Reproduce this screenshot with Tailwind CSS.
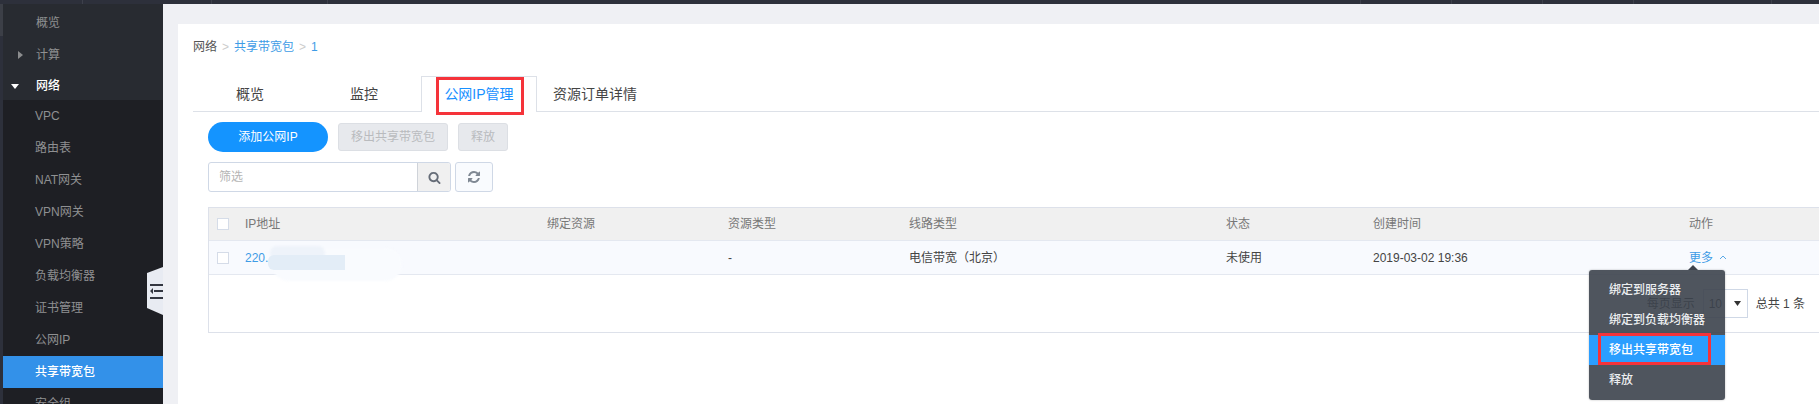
<!DOCTYPE html>
<html lang="en">
<head>
    <meta charset="UTF-8">
    <title>共享带宽包</title>
    <script src="https://cdn.jsdelivr.net/npm/@tailwindcss/browser@4"></script>
</head>
<body class="h-[404px] overflow-hidden bg-[#eff0f4] text-[12px] text-[#444] [font-family:'Liberation_Sans','Noto_Sans_CJK_SC',sans-serif]">
    <div class="relative flex h-[404px] flex-col overflow-hidden">
        <!-- Top bar -->
        <div class="flex h-[4px] shrink-0 bg-[#2d303b]">
            <div class="w-[83px] border-r border-[#3d404b]"></div>
            <div class="w-[129px] border-r border-[#3d404b]"></div>
            <div class="w-[116px] border-r border-[#3d404b]"></div>
            <div class="w-[1033px] border-r border-[#3d404b]"></div>
            <div class="w-[91px] border-r border-[#3d404b]"></div>
            <div class="w-[91px] border-r border-[#3d404b]"></div>
            <div class="w-[91px] border-r border-[#3d404b]"></div>
            <div class="w-[138px] border-r border-[#3d404b]"></div>
        </div>

        <div class="flex min-h-0 flex-1">
            <!-- Sidebar -->
            <div class="flex w-[3px] shrink-0 flex-col bg-[#2d303b]">
                <div class="h-[32px] bg-[#3c3f47]"></div>
            </div>
            <nav class="w-[160px] shrink-0 overflow-hidden bg-[#1e1f24] text-[#8f9092]">
                <div class="bg-[#282b31]">
                    <div class="flex h-[34px] items-center pt-[4px] pl-[33px]">概览</div>
                    <div class="flex h-[32px] items-center pt-[2px]">
                        <span class="w-[33px] pl-[15px]">
                            <svg class="block h-[8px] w-[5px]" viewBox="0 0 5 8"><path d="M0 0l5 4-5 4z" fill="#8b8c8e"/></svg>
                        </span>
                        计算
                    </div>
                    <div class="flex h-[30px] items-center pt-[2px] font-medium text-white">
                        <span class="w-[33px] pl-[8px]">
                            <svg class="block h-[5px] w-[8px]" viewBox="0 0 8 5"><path d="M0 0h8l-4 5z" fill="#fff"/></svg>
                        </span>
                        网络
                    </div>
                </div>
                <ul>
                    <li class="flex h-[32px] items-center pl-[32px]">VPC</li>
                    <li class="flex h-[32px] items-center pl-[32px]">路由表</li>
                    <li class="flex h-[32px] items-center pl-[32px]">NAT网关</li>
                    <li class="flex h-[32px] items-center pl-[32px]">VPN网关</li>
                    <li class="flex h-[32px] items-center pl-[32px]">VPN策略</li>
                    <li class="flex h-[32px] items-center pl-[32px]">负载均衡器</li>
                    <li class="flex h-[32px] items-center pl-[32px]">证书管理</li>
                    <li class="flex h-[32px] items-center pl-[32px]">公网IP</li>
                    <li class="flex h-[32px] items-center bg-[#3391e9] pl-[32px] font-medium text-white">共享带宽包</li>
                    <li class="flex h-[32px] items-center pl-[32px]">安全组</li>
                </ul>
            </nav>

            <!-- Main card -->
            <main class="mt-[20px] ml-[15px] min-w-0 flex-1 bg-white pt-[15px] pl-[15px]">
                <div class="flex h-[16px] items-center text-[#555]">
                    <span>网络</span>
                    <span class="mx-[5px] text-[#ccc]">&gt;</span>
                    <span class="text-[#3e9ce6]">共享带宽包</span>
                    <span class="mx-[5px] text-[#ccc]">&gt;</span>
                    <span class="text-[#3e9ce6]">1</span>
                </div>

                <!-- Tabs -->
                <div class="mt-[21px] flex h-[36px] border-b border-[#dde1e8] text-[14px] text-[#444]">
                    <div class="flex h-[36px] w-[114px] items-center justify-center">概览</div>
                    <div class="flex h-[36px] w-[114px] items-center justify-center">监控</div>
                    <div class="flex h-[36px] w-[116px] items-center justify-center border border-b-0 border-[#dde1e8] bg-white text-[#1890ff]">公网IP管理</div>
                    <div class="flex h-[36px] items-center pl-[16px]">资源订单详情</div>
                </div>

                <div class="pl-[15px]">
                    <!-- Actions -->
                    <div class="mt-[10px] flex h-[30px] items-center">
                        <button class="h-[30px] w-[120px] rounded-[15px] bg-[#1494ff] text-white">添加公网IP</button>
                        <button class="ml-[10px] h-[28px] w-[110px] rounded-[3px] border border-[#dcdfe4] bg-[#e7e9ed] text-[#b9bbbe]">移出共享带宽包</button>
                        <button class="ml-[10px] h-[28px] w-[50px] rounded-[3px] border border-[#dcdfe4] bg-[#e7e9ed] text-[#b9bbbe]">释放</button>
                    </div>

                    <!-- Filter -->
                    <div class="mt-[10px] flex h-[30px]">
                        <div class="flex w-[243px] rounded-[3px] border border-[#cfd8e6]">
                            <div class="flex flex-1 items-center pl-[10px] text-[#b5b5b5]">筛选</div>
                            <div class="flex w-[33px] items-center justify-center rounded-r-[2px] border-l border-[#cfd3d9] bg-[#f0f0f0]">
                                <svg class="h-[13px] w-[13px]" viewBox="0 0 1792 1792"><path fill="#666d78" d="M1216 832q0-185-131.5-316.5t-316.5-131.5-316.5 131.5-131.5 316.5 131.5 316.5 316.5 131.5 316.5-131.5 131.5-316.5zm512 832q0 52-38 90t-90 38q-54 0-90-38l-343-342q-179 124-399 124-143 0-273.5-55.5t-225-150-150-225-55.5-273.5 55.5-273.5 150-225 225-150 273.5-55.5 273.5 55.5 225 150 150 225 55.5 273.5q0 220-124 399l343 343q37 37 37 90z"/></svg>
                            </div>
                        </div>
                        <div class="ml-[4px] flex w-[38px] items-center justify-center rounded-[3px] border border-[#cfd8e6] bg-[#f9fbfe]">
                            <svg class="h-[14px] w-[14px]" viewBox="0 0 1792 1792"><path fill="#7f8893" d="M1639 1056q0 5-1 7-64 268-268 434.5t-478 166.5q-146 0-282.5-55t-243.5-157l-129 129q-19 19-45 19t-45-19-19-45v-448q0-26 19-45t45-19h448q26 0 45 19t19 45-19 45l-137 137q71 66 161 102t187 36q134 0 250-65t186-179q11-17 53-117 8-23 30-23h192q13 0 22.5 9.5t9.5 22.5zm25-800v448q0 26-19 45t-45 19h-448q-26 0-45-19t-19-45 19-45l138-138q-148-137-349-137-134 0-250 65t-186 179q-11 17-53 117-8 23-30 23h-199q-13 0-22.5-9.5t-9.5-22.5v-7q65-268 270-434.5t480-166.5q146 0 284 55.5t245 156.5l130-129q19-19 45-19t45 19 19 45z"/></svg>
                        </div>
                    </div>

                    <!-- Table -->
                    <div class="mt-[15px] border-t border-b border-l border-[#dde1ea]">
                        <div class="grid h-[33px] grid-cols-[36px_302px_181px_181px_317px_147px_316px_1fr] items-center border-b border-[#e4e8f0] bg-[#f0f0f0] text-[#777]">
                            <span class="ml-[8px] h-[12px] w-[12px] border border-[#d5dce8] bg-white"></span>
                            <span>IP地址</span>
                            <span>绑定资源</span>
                            <span>资源类型</span>
                            <span>线路类型</span>
                            <span>状态</span>
                            <span>创建时间</span>
                            <span>动作</span>
                        </div>
                        <div class="grid h-[34px] grid-cols-[36px_302px_181px_181px_317px_147px_316px_1fr] items-center border-b border-[#e4e8f0] bg-[#f8fafe] text-[#444]">
                            <span class="ml-[8px] h-[12px] w-[12px] border border-[#d5dce8] bg-white"></span>
                            <span class="text-[#3e9ce6]">220.</span>
                            <span></span>
                            <span>-</span>
                            <span>电信带宽（北京）</span>
                            <span>未使用</span>
                            <span>2019-03-02 19:36</span>
                            <span class="flex items-center text-[#3e9ce6]">
                                更多
                                <svg class="ml-[6px] h-[5px] w-[8px]" viewBox="0 0 8 5"><path d="M1 4l3-3 3 3" fill="none" stroke="#5aa9e6"/></svg>
                            </span>
                        </div>
                        <!-- Pagination -->
                        <div class="flex h-[57px] items-center justify-end pr-[14px] text-[#444]">
                            <span>每页显示</span>
                            <div class="mx-[8px] flex h-[29px] w-[45px] items-center justify-between border border-[#cfd8e6] pr-[6px] pl-[5px]">
                                <span>10</span>
                                <svg class="h-[5px] w-[7px]" viewBox="0 0 7 5"><path d="M0 0h7l-3.5 5z" fill="#333"/></svg>
                            </div>
                            <span>总共 1 条</span>
                        </div>
                    </div>
                </div>
            </main>
        </div>

        <!-- Sidebar toggle -->
        <svg class="absolute top-[267px] left-[147px] h-[48px] w-[16px]" viewBox="0 0 16 48">
            <path d="M0 6L16 0V48L0 41z" fill="#e8ebf2"/>
            <path d="M3 17h13v2H3zM7 23h9v2H7zM3 30h13v2H3zM3 24l3-3v6z" fill="#333640"/>
        </svg>

        <!-- Redacted IP smear -->
        <div class="absolute top-[248px] left-[272px] h-[33px] w-[130px] rounded-full bg-[#f9fbfe] blur-[1px]"></div>
        <div class="absolute top-[246px] left-[270px] h-[14px] w-[55px] rounded-[8px] bg-[#eef3fa] blur-[1px]"></div>
        <div class="absolute top-[255px] left-[268px] h-[15px] w-[77px] rounded-l-[6px] bg-[#e3edf7]"></div>

        <!-- Tab highlight -->
        <div class="absolute top-[77px] left-[436px] h-[38px] w-[88px] border-[3px] border-[#f5333a]"></div>

        <!-- Dropdown menu -->
        <div class="absolute top-[270px] left-[1589px] w-[136px] rounded-[3px] bg-[#3c424d]/90 py-[5px] font-medium text-[#eceef0] shadow-[0_0_2px_rgba(0,0,0,0.3)]">
            <div class="absolute -top-[5px] left-[99px] h-0 w-0 border-x-[5px] border-b-[5px] border-x-transparent border-b-[#3c424d]"></div>
            <div class="flex h-[30px] items-center pl-[20px]">绑定到服务器</div>
            <div class="flex h-[30px] items-center pl-[20px]">绑定到负载均衡器</div>
            <div class="flex h-[30px] items-center bg-[#2b9eff] pl-[20px] text-white">移出共享带宽包</div>
            <div class="flex h-[30px] items-center pl-[20px]">释放</div>
        </div>
        <div class="absolute top-[333px] left-[1598px] h-[32px] w-[113px] border-[3px] border-[#f5333a]"></div>
    </div>
</body>
</html>
